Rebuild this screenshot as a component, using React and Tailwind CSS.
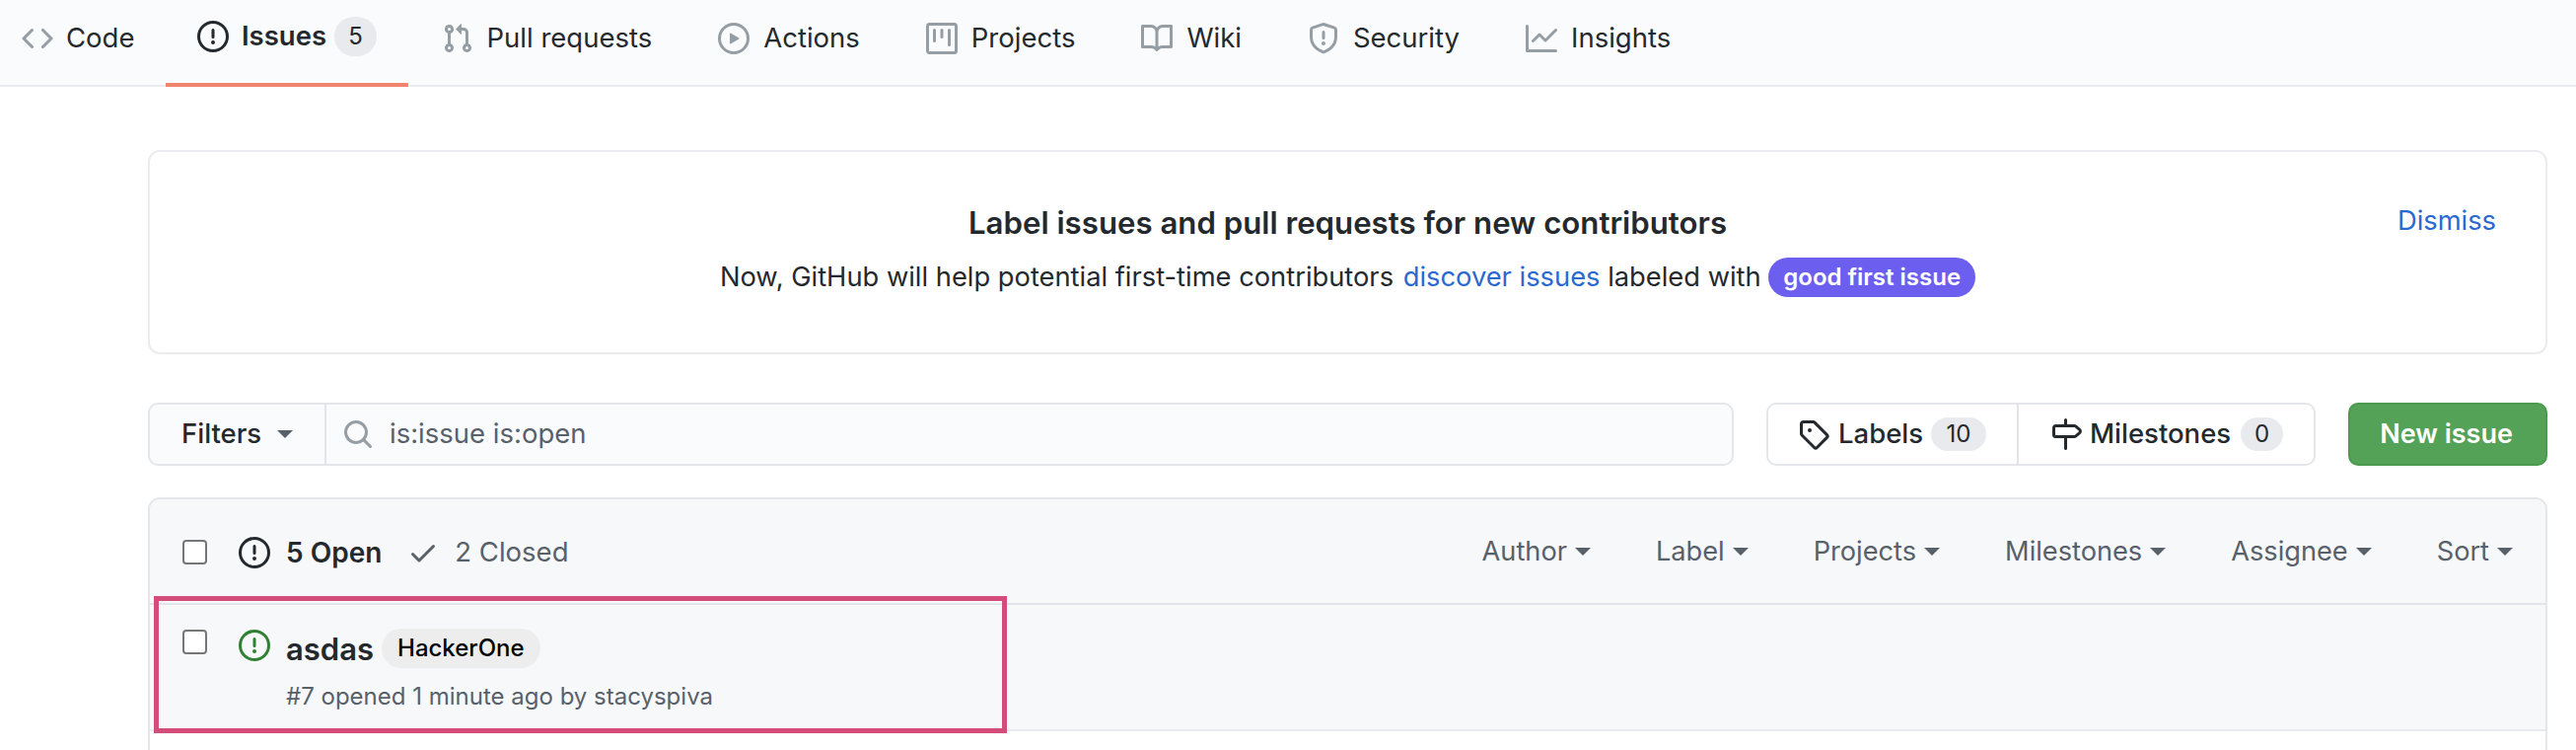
import React from "react";

const paths = {
  code: "M4.72 3.22a.75.75 0 011.06 1.06L2.06 8l3.72 3.72a.75.75 0 11-1.06 1.06L.47 8.53a.75.75 0 010-1.06l4.25-4.25zm6.56 0a.75.75 0 10-1.06 1.06L13.94 8l-3.72 3.72a.75.75 0 101.06 1.06l4.25-4.25a.75.75 0 000-1.06l-4.25-4.25z",
  issue: "M8 1.5a6.5 6.5 0 100 13 6.5 6.5 0 000-13zM0 8a8 8 0 1116 0A8 8 0 010 8zm9 3a1 1 0 11-2 0 1 1 0 012 0zm-.25-6.25a.75.75 0 00-1.5 0v3.5a.75.75 0 001.5 0v-3.5z",
  pull: "M7.177 3.073L9.573.677A.25.25 0 0110 .854v4.792a.25.25 0 01-.427.177L7.177 3.427a.25.25 0 010-.354zM3.75 2.5a.75.75 0 100 1.5.75.75 0 000-1.5zm-2.25.75a2.25 2.25 0 113 2.122v5.256a2.251 2.251 0 11-1.5 0V5.372A2.25 2.25 0 011.5 3.25zM11 2.5h-1V4h1a1 1 0 011 1v5.628a2.251 2.251 0 101.5 0V5A2.5 2.5 0 0011 2.5zm1 10.25a.75.75 0 111.5 0 .75.75 0 01-1.5 0zM3.75 12a.75.75 0 100 1.5.75.75 0 000-1.5z",
  play: "M1.5 8a6.5 6.5 0 1113 0 6.5 6.5 0 01-13 0zM8 0a8 8 0 100 16A8 8 0 008 0zM6.379 5.227A.25.25 0 006 5.442v5.117a.25.25 0 00.379.214l4.264-2.559a.25.25 0 000-.428L6.379 5.227z",
  project: "M1.75 0A1.75 1.75 0 000 1.75v12.5C0 15.216.784 16 1.75 16h12.5A1.75 1.75 0 0016 14.25V1.75A1.75 1.75 0 0014.25 0H1.75zM1.5 1.75a.25.25 0 01.25-.25h12.5a.25.25 0 01.25.25v12.5a.25.25 0 01-.25.25H1.75a.25.25 0 01-.25-.25V1.75zM11.75 3a.75.75 0 00-.75.75v7.5a.75.75 0 001.5 0v-7.5a.75.75 0 00-.75-.75zm-8.25.75a.75.75 0 011.5 0v5.5a.75.75 0 01-1.5 0v-5.5zM8 3a.75.75 0 00-.75.75v3.5a.75.75 0 001.5 0v-3.5A.75.75 0 008 3z",
  book: "M0 1.75A.75.75 0 01.75 1h4.253c1.227 0 2.317.59 3 1.501A3.744 3.744 0 0111.006 1h4.245a.75.75 0 01.75.75v10.5a.75.75 0 01-.75.75h-4.507a2.25 2.25 0 00-1.591.659l-.622.621a.75.75 0 01-1.06 0l-.622-.621A2.25 2.25 0 005.258 13H.75a.75.75 0 01-.75-.75V1.75zm8.755 3a2.25 2.25 0 012.25-2.25H14.5v9h-3.757c-.71 0-1.4.201-1.992.572l.004-7.322zm-1.504 7.324l.004-5.073-.002-2.253A2.25 2.25 0 005.003 2.5H1.5v9h3.757a3.75 3.75 0 011.994.574z",
  shield: "M7.467.133a1.75 1.75 0 011.066 0l5.25 1.68A1.75 1.75 0 0115 3.48V7c0 1.566-.32 3.182-1.303 4.682-.983 1.498-2.585 2.813-5.032 3.855a1.7 1.7 0 01-1.33 0c-2.447-1.042-4.049-2.357-5.032-3.855C1.32 10.182 1 8.566 1 7V3.48a1.75 1.75 0 011.217-1.667l5.25-1.68zm.61 1.429a.25.25 0 00-.153 0l-5.25 1.68a.25.25 0 00-.174.238V7c0 1.358.275 2.666 1.057 3.86.784 1.194 2.121 2.34 4.366 3.297a.2.2 0 00.154 0c2.245-.956 3.582-2.104 4.366-3.298C13.225 9.666 13.5 8.36 13.5 7V3.48a.25.25 0 00-.174-.237l-5.25-1.68zM9 10.5a1 1 0 11-2 0 1 1 0 012 0zm-.25-5.75a.75.75 0 10-1.5 0v3a.75.75 0 001.5 0v-3z",
  graph: "M1.5 1.75a.75.75 0 00-1.5 0v12.5c0 .414.336.75.75.75h14.5a.75.75 0 000-1.5H1.5V1.75zm14.28 2.53a.75.75 0 00-1.06-1.06L10 7.94 7.53 5.47a.75.75 0 00-1.06 0L3.22 8.72a.75.75 0 001.06 1.06L7 7.06l2.47 2.47a.75.75 0 001.06 0l5.25-5.25z",
  tag: "M2.5 7.775V2.75a.25.25 0 01.25-.25h5.025a.25.25 0 01.177.073l6.25 6.25a.25.25 0 010 .354l-5.025 5.025a.25.25 0 01-.354 0l-6.25-6.25a.25.25 0 01-.073-.177zm-1.5 0V2.75C1 1.784 1.784 1 2.75 1h5.025c.464 0 .91.184 1.238.513l6.25 6.25a1.75 1.75 0 010 2.474l-5.026 5.026a1.75 1.75 0 01-2.474 0l-6.25-6.25A1.75 1.75 0 011 7.775zM6 5a1 1 0 100 2 1 1 0 000-2z",
  milestone: "M7.75 0a.75.75 0 01.75.75V3h3.634c.414 0 .814.147 1.13.414l2.07 1.75a1.75 1.75 0 010 2.672l-2.07 1.75a1.75 1.75 0 01-1.13.414H8.5v5.25a.75.75 0 11-1.5 0V10H2.75A1.75 1.75 0 011 8.25v-3.5C1 3.784 1.784 3 2.75 3H7V.75A.75.75 0 017.75 0zm0 8.5h4.384a.25.25 0 00.161-.06l2.07-1.75a.25.25 0 000-.38l-2.07-1.75a.25.25 0 00-.161-.06H2.75a.25.25 0 00-.25.25v3.5c0 .138.112.25.25.25h5z",
  search: "M11.5 7a4.499 4.499 0 11-8.998 0A4.499 4.499 0 0111.5 7zm-.82 4.74a6 6 0 111.06-1.06l3.04 3.04a.75.75 0 11-1.06 1.06l-3.04-3.04z",
  check: "M13.78 4.22a.75.75 0 010 1.06l-7.25 7.25a.75.75 0 01-1.06 0L2.22 9.28a.75.75 0 011.06-1.06L6 10.94l6.72-6.72a.75.75 0 011.06 0z",
};

const Icon = ({ name, className = "" }) => (
  <svg viewBox="0 0 16 16" width="32" height="32" fill="currentColor" fillRule="evenodd" className={"shrink-0 " + className}>
    <path d={paths[name]} />
  </svg>
);

const Caret = () => (
  <span className="inline-block w-0 h-0 border-x-[8px] border-x-transparent border-t-[8px] border-t-[#586069]" />
);

const Box = () => <span className="block w-[25px] h-[25px] rounded-[4px] border-2 border-[#767676] bg-white shrink-0" />;

const tabs = [
  ["pull", "Pull requests"],
  ["play", "Actions"],
  ["project", "Projects"],
  ["book", "Wiki"],
  ["shield", "Security"],
  ["graph", "Insights"],
];

const sorts = ["Author", "Label", "Projects", "Milestones", "Assignee", "Sort"];

export default function App() {
  return (
    <div className="w-[2612px] h-[760px] overflow-hidden bg-white relative text-[#24292e] font-['Inter',sans-serif] text-[27.5px]">
      <nav className="h-[88px] bg-[#fafbfc] border-b-2 border-[#eaecef] flex items-start pl-[22px]">
        <a className="w-[146px] flex items-center gap-[13px] h-[86px] pb-[8px]">
          <Icon name="code" className="text-[#959da5]" />
          <span>Code</span>
        </a>
        <a className="w-[246px] flex items-center h-[88px] pb-[10px] pl-[32px] border-b-4 border-[#f0846e]">
          <Icon name="issue" />
          <span className="ml-[13px] font-semibold">Issues</span>
          <span className="ml-[8px] w-[43px] h-[40px] rounded-full bg-[#e8eaed] flex items-center justify-center text-[24px]">5</span>
        </a>
        {tabs.map(([name, label]) => (
          <a key={label} className="flex items-center gap-[14px] h-[86px] pb-[8px] px-[33.5px]">
            <Icon name={name} className="text-[#959da5]" />
            <span>{label}</span>
          </a>
        ))}
      </nav>

      <main className="pl-[150px] pr-[29px]">
        <section className="mt-[64px] h-[207px] rounded-[12px] border-2 border-[#ebebf0] bg-white relative flex flex-col items-center">
          <h2 className="mt-[51px] text-[31.2px] leading-[42px] font-semibold">Label issues and pull requests for new contributors</h2>
          <p className="mt-[14px] text-[27.3px] leading-[40px] flex items-center">
            <span>Now, GitHub will help potential first-time contributors&nbsp;</span>
            <a className="text-[#2a69cf] ml-[2px]">discover issues</a>
            <span>&nbsp;labeled with&nbsp;</span>
            <span className="h-[40px] px-[15px] rounded-full bg-[#6c5ff0] text-white text-[24px] font-semibold flex items-center">good first issue</span>
          </p>
          <a className="absolute right-[50px] top-[50px] text-[#2a69cf] text-[27.3px] leading-[40px]">Dismiss</a>
        </section>

        <div className="mt-[49px] h-[64px] flex items-stretch">
          <div className="w-[1608px] flex rounded-[10px] border-2 border-[#e4e6ea] bg-[#fafbfc] overflow-hidden">
            <div className="w-[179px] border-r-2 border-[#e1e4e8] flex items-center pl-[32px] gap-[16px] font-medium">
              <span>Filters</span>
              <Caret />
            </div>
            <div className="flex items-center pl-[16px] gap-[16px] text-[#586069]">
              <Icon name="search" className="text-[#959da5]" />
              <span>is:issue is:open</span>
            </div>
          </div>
          <div className="ml-[33px] w-[557px] flex rounded-[10px] border-2 border-[#e4e6ea] bg-white font-medium">
            <div className="w-[254px] border-r-2 border-[#e1e4e8] flex items-center pl-[30px]">
              <Icon name="tag" />
              <span className="ml-[9px]">Labels</span>
              <span className="ml-[8px] w-[56px] h-[34px] rounded-full bg-[#e8eaed] flex items-center justify-center text-[24px] font-normal">10</span>
            </div>
            <div className="flex items-center pl-[32px]">
              <Icon name="milestone" />
              <span className="ml-[8px]">Milestones</span>
              <span className="ml-[10px] w-[43px] h-[34px] rounded-full bg-[#e8eaed] flex items-center justify-center text-[24px] font-normal">0</span>
            </div>
          </div>
          <button className="ml-[33px] w-[202px] pr-[3px] rounded-[10px] border-2 border-[#4c9a50] bg-[#53a257] text-white font-semibold text-[27px]">New issue</button>
        </div>

        <section className="mt-[32px] h-[300px] rounded-t-[12px] border-2 border-[#e4e6ea]">
          <header className="h-[107px] pt-[2px] bg-[#f6f8fa] border-b-2 border-[#e1e4e8] flex items-center pl-[33px] pr-[33px] rounded-t-[10px]">
            <Box />
            <Icon name="issue" className="ml-[32px]" />
            <span className="ml-[16px] font-semibold text-[28px]">5 Open</span>
            <Icon name="check" className="ml-[26px] text-[#586069]" />
            <span className="ml-[16px] text-[#586069]">2 Closed</span>
            <div className="ml-auto flex items-center gap-[66px] text-[#586069] text-[27.2px]">
              {sorts.map((s) => (
                <span key={s} className="flex items-center gap-[8px]">
                  {s}
                  <Caret />
                </span>
              ))}
            </div>
          </header>
          <div className="h-[128px] bg-[#f6f8fa] border-b-2 border-[#e8eaed] pl-[33px] pt-[24px] flex items-start">
            <span className="mt-[1px]"><Box /></span>
            <Icon name="issue" className="ml-[32px] mt-[1px] text-[#2f8132]" />
            <div className="ml-[16px]">
              <div className="flex items-center h-[40px]">
                <span className="text-[31px] font-semibold leading-[40px] mt-[2px]">asdas</span>
                <span className="ml-[8px] h-[40px] px-[16px] rounded-full bg-[#ededed] text-black text-[24px] font-medium flex items-center">HackerOne</span>
              </div>
              <p className="mt-[12px] text-[24px] leading-[34px] text-[#586069]">#7 opened 1 minute ago by stacyspiva</p>
            </div>
          </div>
        </section>
      </main>

      <div className="absolute left-[156px] top-[604px] w-[865px] h-[139px] border-[5px] border-[#d44d7a] pointer-events-none" />
    </div>
  );
}
